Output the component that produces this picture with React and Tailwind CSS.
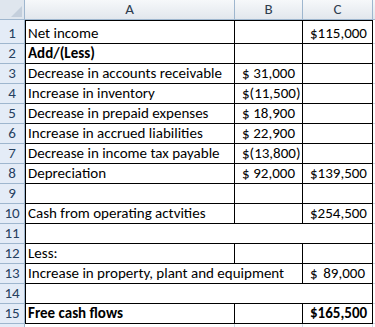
const rows = [
  { n: 1, a: "Net income", c: "115,000", tall: true },
  { n: 2, a: "Add/(Less)", bold: true },
  { n: 3, a: "Decrease in accounts receivable", b: "31,000" },
  { n: 4, a: "Increase in inventory", b: "(11,500)" },
  { n: 5, a: "Decrease in prepaid expenses", b: "18,900" },
  { n: 6, a: "Increase in accrued liabilities", b: "22,900" },
  { n: 7, a: "Decrease in income tax payable", b: "(13,800)" },
  { n: 8, a: "Depreciation", b: "92,000", c: "139,500" },
  { n: 9 },
  { n: 10, a: "Cash from operating actvities", c: "254,500" },
  { n: 11, span: "all" },
  { n: 12, a: "Less:" },
  { n: 13, a: "Increase in property, plant and equipment", c: "89,000", span: "ab" },
  { n: 14, span: "all" },
  { n: 15, a: "Free cash flows", c: "165,500", bold: true },
];

function Money({ value, bold }) {
  if (!value) return null;
  const neg = value.startsWith("(");
  return (
    <div
      className={`flex w-full justify-between pl-[7px] ${neg ? "pr-[2px]" : "pr-[7px]"} ${bold ? "font-bold" : ""}`}
    >
      <span>$</span>
      <span>{value}</span>
    </div>
  );
}

function RowHead({ n, tall }) {
  return (
    <div
      className={`w-[25px] shrink-0 ${tall ? "h-[24px]" : "h-[20px]"} bg-[#e4ecf7] border-r border-b border-[#9eb6ce] flex items-end justify-center text-[#26405f] leading-[19px]`}
    >
      {n}
    </div>
  );
}

function Row({ r }) {
  const h = r.tall ? "h-[24px] border-t" : "h-[20px]";
  const cell = `${h} border-b border-r border-black flex items-end leading-[19px]`;
  return (
    <div className="flex">
      <RowHead n={r.n} tall={r.tall} />
      {r.span === "all" ? (
        <div className={`${cell} w-[348px] border-l`} />
      ) : (
        <>
          <div
            className={`${cell} border-l pl-[2px] whitespace-nowrap ${r.span === "ab" ? "w-[278px]" : "w-[210px]"} ${r.bold ? "font-bold" : ""}`}
          >
            {r.a}
          </div>
          {r.span !== "ab" && (
            <div className={`${cell} w-[68px]`}>
              <Money value={r.b} />
            </div>
          )}
          <div className={`${cell} w-[70px]`}>
            <Money value={r.c} bold={r.bold} />
          </div>
        </>
      )}
      <div className={`${r.tall ? "h-[24px]" : "h-[20px]"} flex-1 border-b border-[#d0d7e5]`} />
    </div>
  );
}

export default function App() {
  return (
    <div
      className="w-[375px] h-[327px] overflow-hidden bg-white text-black text-[15px]"
      style={{ fontFamily: "Carlito, Lato, 'Liberation Sans', sans-serif" }}
    >
      <div className="flex h-[20px]">
        <div className="relative w-[25px] shrink-0 bg-[#dfe6ee] border-r border-b border-[#9eb6ce]">
          <svg className="absolute right-[2px] bottom-[2px]" width="11" height="11" viewBox="0 0 11 11">
            <polygon points="11,0 11,11 0,11" fill="#c4cfdc" />
          </svg>
        </div>
        {[
          ["A", "w-[210px]"],
          ["B", "w-[68px]"],
          ["C", "w-[70px]"],
        ].map(([l, w]) => (
          <div
            key={l}
            className={`${w} flex items-center justify-center bg-linear-to-b from-[#f6f8fa] to-[#e2e7ed] border-r border-b border-[#9eb6ce] text-[#2f3d4e]`}
          >
            {l}
          </div>
        ))}
        <div className="flex-1 bg-linear-to-b from-[#f6f8fa] to-[#e2e7ed] border-b border-[#9eb6ce]" />
      </div>
      {rows.map((r) => (
        <Row key={r.n} r={r} />
      ))}
      <div className="flex h-[20px]">
        <div className="w-[25px] shrink-0 bg-[#e4ecf7] border-r border-[#9eb6ce]" />
        <div className="w-[210px] border-r border-[#d0d7e5]" />
        <div className="w-[68px] border-r border-[#d0d7e5]" />
        <div className="w-[70px] border-r border-[#d0d7e5]" />
      </div>
    </div>
  );
}
